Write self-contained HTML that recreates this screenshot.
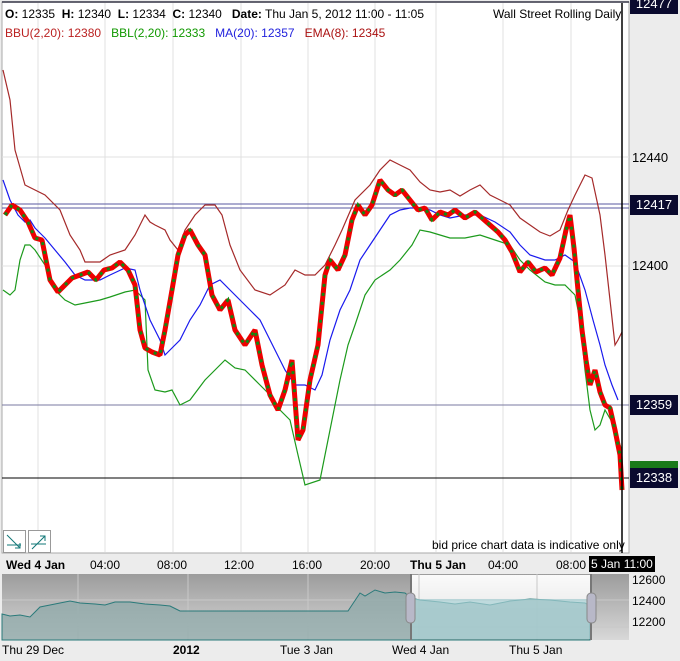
<!DOCTYPE html>
<html><head><meta charset="utf-8"><style>
body{margin:0;width:680px;height:661px;background:#ececec;font-family:"Liberation Sans",sans-serif;overflow:hidden;position:relative}
.t{position:absolute;font-size:12px;white-space:nowrap}
.lbl{position:absolute;left:630px;width:48px;height:20px;background:#0a0a2e;color:#fff;font-size:13px;line-height:20px;text-align:center}
</style></head><body>
<svg width="680" height="661" style="position:absolute;left:0;top:0">
<rect x="2" y="2" width="627" height="551" fill="#fff" stroke="#aaa"/>
<line x1="2" y1="2" x2="629" y2="2" stroke="#334" stroke-width="1.5"/>
<g stroke="#e0e0e0" stroke-width="1">
<line x1="38" y1="3" x2="38" y2="552"/><line x1="105" y1="3" x2="105" y2="552"/><line x1="173" y1="3" x2="173" y2="552"/><line x1="241" y1="3" x2="241" y2="552"/><line x1="308" y1="3" x2="308" y2="552"/><line x1="375" y1="3" x2="375" y2="552"/><line x1="436" y1="3" x2="436" y2="552"/><line x1="503" y1="3" x2="503" y2="552"/><line x1="571" y1="3" x2="571" y2="552"/>
<line x1="2" y1="157" x2="629" y2="157"/><line x1="2" y1="266" x2="629" y2="266"/>
</g>
<line x1="2" y1="204" x2="629" y2="204" stroke="#5a5aa0"/><line x1="2" y1="208" x2="629" y2="208" stroke="#5a5aa0"/>
<line x1="2" y1="405" x2="629" y2="405" stroke="#7a7aa0"/>
<line x1="2" y1="478" x2="629" y2="478" stroke="#000"/>
<polyline fill="none" stroke="#a52a2a" stroke-width="1.2" points="3,70 10,100 15,150 25,185 45,195 60,210 70,235 80,250 85,262 100,262 110,255 125,250 135,235 145,215 150,222 155,225 165,230 170,240 178,250 185,230 195,215 205,205 215,205 222,215 230,245 240,270 255,290 270,295 285,285 295,270 305,275 315,275 325,265 335,245 342,230 355,200 370,185 380,170 390,160 400,165 410,170 420,182 430,190 440,192 450,190 460,196 470,190 480,185 490,195 500,200 510,205 520,218 530,225 540,232 550,236 560,230 568,210 575,195 585,175 592,178 600,215 605,255 610,300 615,345 618,340 622,332"/>
<polyline fill="none" stroke="#1c9a1c" stroke-width="1.2" points="3,290 10,295 15,290 20,260 25,245 30,245 35,250 45,265 55,290 65,300 75,305 85,303 100,300 110,297 125,292 135,290 145,300 148,370 155,390 165,392 172,390 180,405 190,400 205,380 215,370 225,360 235,368 245,370 260,385 270,395 280,410 290,420 298,455 305,485 320,480 330,430 340,380 348,345 355,325 365,295 375,280 390,270 400,260 408,250 412,245 420,230 430,232 440,235 450,238 465,238 480,235 495,240 510,245 520,260 530,270 545,282 555,285 565,285 575,295 580,320 585,370 590,410 595,430 600,425 605,410 612,422 618,440 622,450"/>
<polyline fill="none" stroke="#1a1aee" stroke-width="1.2" points="3,180 10,200 18,215 25,222 30,220 35,228 45,238 55,250 65,262 75,275 85,280 100,280 110,275 125,268 135,270 140,290 150,320 160,340 165,355 170,350 180,340 190,320 200,305 210,285 220,280 230,290 240,300 250,310 260,320 270,340 285,370 295,385 305,385 315,390 322,375 330,340 340,310 350,290 360,260 370,245 380,230 390,215 400,210 410,208 420,208 430,210 440,215 450,218 465,215 480,215 495,222 510,232 520,245 530,255 545,260 555,260 565,255 575,262 585,290 593,320 600,345 605,365 612,385 618,400"/>
<polyline fill="none" stroke="#e00" stroke-width="5" stroke-linejoin="bevel" points="5,215 12,205 20,210 28,222 35,238 42,240 50,280 58,292 65,285 72,278 80,275 88,272 96,280 104,270 112,268 120,262 128,270 135,285 140,330 145,348 152,352 160,355 165,330 172,290 178,255 185,235 190,230 198,245 205,255 212,295 220,310 228,300 235,330 245,345 255,330 262,365 270,395 278,410 285,390 292,360 298,440 303,430 310,380 318,345 325,275 330,260 338,270 345,255 352,220 358,205 365,215 372,205 380,180 388,190 395,195 402,190 410,200 418,210 425,208 432,220 440,212 448,215 455,210 465,218 475,212 482,218 490,225 498,232 505,240 512,252 520,272 528,262 536,272 545,268 552,275 560,258 566,230 570,215 574,248 578,290 582,330 586,360 590,385 595,370 600,392 605,405 610,408 615,430 620,455 622,490"/>
<polyline fill="none" stroke="#118811" stroke-width="3" stroke-dasharray="3,6" points="5,215 12,205 20,210 28,222 35,238 42,240 50,280 58,292 65,285 72,278 80,275 88,272 96,280 104,270 112,268 120,262 128,270 135,285 140,330 145,348 152,352 160,355 165,330 172,290 178,255 185,235 190,230 198,245 205,255 212,295 220,310 228,300 235,330 245,345 255,330 262,365 270,395 278,410 285,390 292,360 298,440 303,430 310,380 318,345 325,275 330,260 338,270 345,255 352,220 358,205 365,215 372,205 380,180 388,190 395,195 402,190 410,200 418,210 425,208 432,220 440,212 448,215 455,210 465,218 475,212 482,218 490,225 498,232 505,240 512,252 520,272 528,262 536,272 545,268 552,275 560,258 566,230 570,215 574,248 578,290 582,330 586,360 590,385 595,370 600,392 605,405 610,408 615,430 620,455 622,490"/>
<line x1="622" y1="3" x2="622" y2="553" stroke="#000" stroke-width="1.5"/>
<rect x="3.5" y="530.5" width="22" height="22" fill="#fff" stroke="#999"/>
<rect x="28.5" y="530.5" width="22" height="22" fill="#fff" stroke="#999"/>
<path d="M7 535 L20 548 M20 543 L20 548 L15 548 M7 545 L21 545" stroke="#177" fill="none"/>
<path d="M32 549 L45 536 M40 536 L45 536 L45 541 M31 544 L46 544" stroke="#177" fill="none"/>
<defs><linearGradient id="g" x1="0" y1="0" x2="0" y2="1"><stop offset="0" stop-color="#9c9c9c"/><stop offset="1" stop-color="#d8d8d8"/></linearGradient>
<linearGradient id="w" x1="0" y1="0" x2="0" y2="1"><stop offset="0" stop-color="#fafafa"/><stop offset="1" stop-color="#e0e0e0"/></linearGradient></defs>
<rect x="2" y="574" width="627" height="66" fill="url(#g)"/>
<rect x="411" y="575" width="180" height="64" fill="url(#w)"/>
<g stroke="#c8c8c8"><line x1="78" y1="574" x2="78" y2="640"/><line x1="188" y1="574" x2="188" y2="640"/><line x1="308" y1="574" x2="308" y2="640"/><line x1="419" y1="574" x2="419" y2="640"/><line x1="537" y1="574" x2="537" y2="640"/><line x1="2" y1="600" x2="629" y2="600"/><line x1="2" y1="627" x2="629" y2="627"/></g>
<path d="M2 614 L10 616 L20 615 L30 617 L35 612 L40 607 L50 605 L60 603 L70 601 L80 603 L95 604 L105 605 L115 602 L130 602 L145 604 L160 605 L170 606 L176 609 L180 611 L348 611 L360 593 L365 596 L375 590 L385 593 L395 592 L405 593 L411 598 L420 600 L440 602 L455 604 L470 602 L490 605 L495 604 L510 601 L530 599 L550 600 L570 602 L585 603 L590 606 L590 640 L2 640 Z" fill="#8fa9a9" fill-opacity="0.75" stroke="#2a7a7a"/>
<rect x="411" y="599" width="180" height="40" fill="#a9d2d6" opacity="0.7"/>
<line x1="411" y1="574" x2="411" y2="640" stroke="#777" stroke-width="2"/><line x1="591" y1="574" x2="591" y2="640" stroke="#777" stroke-width="2"/>
<rect x="406" y="593" width="9" height="30" rx="4" fill="#b8b8c8" stroke="#888"/>
<rect x="587" y="593" width="9" height="30" rx="4" fill="#b8b8c8" stroke="#888"/>
</svg>
<div class="t" style="left:5px;top:7px;color:#000"><b>O:</b> 12335 &nbsp;<b>H:</b> 12340 &nbsp;<b>L:</b> 12334 &nbsp;<b>C:</b> 12340 &nbsp;&nbsp;<b>Date:</b> Thu Jan 5, 2012 11:00 - 11:05</div>
<div class="t" style="left:493px;top:7px">Wall Street Rolling Daily</div>
<div class="t" style="left:5px;top:26px"><span style="color:#b22">BBU(2,20): 12380</span> &nbsp;&nbsp;<span style="color:#190">BBL(2,20): 12333</span> &nbsp;&nbsp;<span style="color:#22d">MA(20): 12357</span> &nbsp;&nbsp;<span style="color:#a11">EMA(8): 12345</span></div>
<div class="t" style="left:432px;top:538px">bid price chart data is indicative only</div>
<div class="lbl" style="top:-6px">12477</div>
<div class="lbl" style="top:195px">12417</div>
<div class="t" style="left:632px;top:258px;font-size:13px">12400</div>
<div class="t" style="left:632px;top:150px;font-size:13px">12440</div>
<div class="lbl" style="top:395px">12359</div>
<div class="lbl" style="top:461px;background:#1a7a1a;height:14px"></div>
<div class="lbl" style="top:468px">12338</div>
<div class="t" style="left:6px;top:558px"><b>Wed 4 Jan</b></div>
<div class="t" style="left:90px;top:558px">04:00</div>
<div class="t" style="left:157px;top:558px">08:00</div>
<div class="t" style="left:224px;top:558px">12:00</div>
<div class="t" style="left:292px;top:558px">16:00</div>
<div class="t" style="left:360px;top:558px">20:00</div>
<div class="t" style="left:410px;top:558px"><b>Thu 5 Jan</b></div>
<div class="t" style="left:488px;top:558px">04:00</div>
<div class="t" style="left:556px;top:558px">08:00</div>
<div class="t" style="left:589px;top:556px;background:#000;color:#fff;padding:1px 2px">5 Jan 11:00</div>
<div class="t" style="left:632px;top:573px">12600</div>
<div class="t" style="left:632px;top:594px">12400</div>
<div class="t" style="left:632px;top:615px">12200</div>
<div class="t" style="left:2px;top:643px">Thu 29 Dec</div>
<div class="t" style="left:173px;top:643px"><b>2012</b></div>
<div class="t" style="left:280px;top:643px">Tue 3 Jan</div>
<div class="t" style="left:392px;top:643px">Wed 4 Jan</div>
<div class="t" style="left:509px;top:643px">Thu 5 Jan</div>
</body></html>
